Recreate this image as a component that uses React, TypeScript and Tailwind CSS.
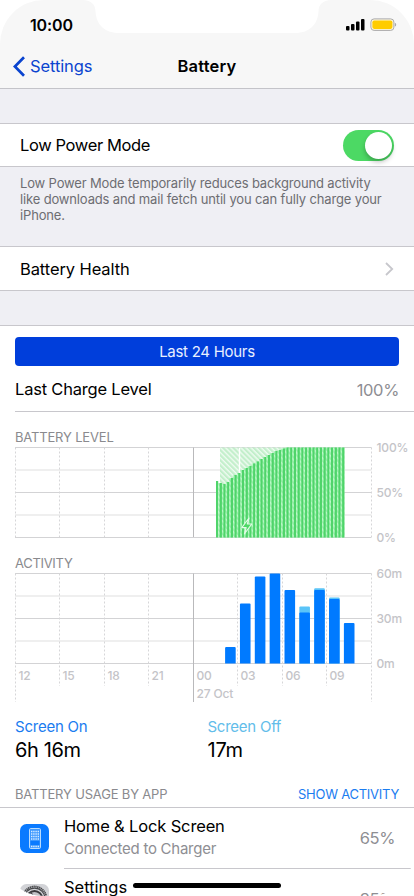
import type { ReactNode } from 'react';

const LEVEL_TOPS = [
  481, 483, 484, 482, 478, 475, 473, 470, 468, 466, 463.5, 461.5, 459, 457, 455, 453, 451, 450, 448.5,
];
const LEVELS = Array.from({ length: 35 }, (_, i) => (LEVEL_TOPS[i] ?? 447.5) - 440);

const ACTIVITY = [
  { on: 16.5, off: 0 },
  { on: 60, off: 0 },
  { on: 87, off: 0 },
  { on: 90, off: 0 },
  { on: 73.5, off: 0 },
  { on: 51, off: 6 },
  { on: 73.5, off: 1.7 },
  { on: 64.5, off: 1.5 },
  { on: 40.5, off: 0 },
];

const HOURS = ['12', '15', '18', '21', '00', '03', '06', '09'];
const GRID_X = [15.5, 59.5, 104.5, 148.5, 193.5, 237.5, 282.5, 326.5, 371.5];

function Grid({ top, long }: { top: number; long?: boolean }) {
  return (
    <g>
      {[0, 45, 90].map(y => (
        <path key={y} d={`M15 ${top + y + 0.5}H371.5`} stroke="#d3d3d5" />
      ))}
      {[22.5, 67.5].map(y => (
        <path key={y} d={`M15 ${top + y + 0.5}H371.5`} stroke="#efefef" strokeWidth="2" />
      ))}
      {GRID_X.map((x, i) => {
        const edge = i === 0 || i === 4 || i === 8;
        const bottom = top + (long ? (edge ? 129 : 113) : 90);
        return (
          <path
            key={x}
            d={`M${x} ${top + 0.5}V${bottom}`}
            stroke={i === 4 ? '#b9b9bb' : '#d6d6d8'}
            strokeDasharray={i === 4 ? undefined : '2 2'}
          />
        );
      })}
    </g>
  );
}

function Label({ x, y, children }: { x: number; y: number; children: ReactNode }) {
  return (
    <text x={x} y={y} fill="#c4c4c8" className="text-[12px] font-medium tracking-[-0.15px]">
      {children}
    </text>
  );
}

function LevelChart() {
  return (
    <svg width="414" height="104" viewBox="0 0 414 104" className="block overflow-visible">
      <defs>
        <pattern id="hatch" width="3.6" height="3.6" patternUnits="userSpaceOnUse" patternTransform="rotate(-45)">
          <rect width="3.6" height="3.6" fill="#effbf1" />
          <rect width="2.2" height="3.6" fill="#c3efcb" />
        </pattern>
        <pattern id="hatchDark" width="3.6" height="3.6" patternUnits="userSpaceOnUse" patternTransform="rotate(-45)">
          <rect width="3.6" height="3.6" fill="#bbf9c7" />
          <rect width="2" height="3.6" fill="#95efa7" />
        </pattern>
      </defs>
      <Grid top={7} />
      <rect x="220" y="7.5" width="67" height="45" fill="url(#hatch)" />
      <path d="M239.5 8V33" stroke="#fff" strokeWidth="1.4" />
      {LEVELS.map((y, i) => (
        <g key={i}>
          {i > 0 && <rect x={214.6 + i * 3.71} y={y} width="3.8" height={97.5 - y} fill="url(#hatchDark)" />}
          <rect x={216 + i * 3.71} y={y} width="2.2" height={97.5 - y} fill="#4fd46a" />
        </g>
      ))}
      <path d="M249 78l-7.2 9.6h4.4l-1.8 6.2 7.4-9.8h-4.5z" fill="#4cd964" stroke="#e3fbe7" strokeWidth="1.1" strokeLinejoin="round" />
      <Label x={376.5} y={12}>100%</Label>
      <Label x={376.5} y={57}>50%</Label>
      <Label x={376.5} y={102}>0%</Label>
    </svg>
  );
}

function ActivityChart() {
  return (
    <svg width="414" height="137" viewBox="0 0 414 137" className="block overflow-visible">
      <Grid top={3} long />
      {ACTIVITY.map(({ on, off }, i) => {
        const x = 225.1 + i * 14.85;
        const h = on + off;
        return (
          <g key={i}>
            {off > 0 && (
              <path d={`M${x} 93.5v${1 - h}q0-1 1-1h8.6q1 0 1 1v${h - 1}z`} fill="#5ac4f8" />
            )}
            <path d={`M${x} 93.5v${1 - on}q0-1 1-1h8.6q1 0 1 1v${on - 1}z`} fill="#007aff" />
          </g>
        );
      })}
      {HOURS.map((h, i) => (
        <Label key={h} x={GRID_X[i] + 3} y={110}>{h}</Label>
      ))}
      <Label x={196.5} y={128}>27 Oct</Label>
      <Label x={376.5} y={8}>60m</Label>
      <Label x={376.5} y={53}>30m</Label>
      <Label x={376.5} y={98}>0m</Label>
    </svg>
  );
}

function StatusIcons() {
  return (
    <svg width="50" height="14" viewBox="0 0 50 14" className="overflow-visible">
      <rect x="0" y="8" width="3.5" height="4.5" rx="1" />
      <rect x="5" y="6" width="3.5" height="6.5" rx="1" />
      <rect x="10" y="3.5" width="3.5" height="9" rx="1" />
      <rect x="15" y="1" width="3.5" height="11.5" rx="1" />
      <rect x="24.9" y="0.9" width="23" height="11.5" rx="3.2" fill="#fdf6d8" stroke="#a9a9ac" />
      <rect x="26.4" y="2.4" width="20" height="8.5" rx="1.8" fill="#ffcc00" />
      <path d="M48.9 4.8q1.3.6 1.3 1.9t-1.3 1.9z" fill="#a9a9ac" />
    </svg>
  );
}

function HomeIcon() {
  return (
    <svg width="29" height="29" viewBox="0 0 29 29">
      <rect width="29" height="29" rx="6.5" fill="#0a7aff" />
      <rect x="9.5" y="4.5" width="11" height="20" rx="1.2" fill="#3d98ff" stroke="#b9dcff" />
      {[7.5, 10, 12.5, 15].map(y => (
        <path key={y} d={`M11 ${y}h8`} stroke="#d8ecff" strokeWidth="1.4" strokeDasharray="1.4 .8" />
      ))}
      <rect x="10.5" y="17" width="9" height="4" fill="#0a7aff" />
      <path d="M11 22.5h8" stroke="#d8ecff" strokeWidth="1.4" strokeDasharray="1.4 .8" />
    </svg>
  );
}

function GearIcon() {
  return (
    <svg width="29" height="29" viewBox="0 0 29 29">
      <rect width="29" height="29" rx="6.5" fill="#d2d3d7" />
      <circle cx="14.5" cy="14.5" r="12" fill="none" stroke="#47484b" strokeWidth="1.8" strokeDasharray="1.4 .5" />
      <circle cx="14.5" cy="14.5" r="10.4" fill="#d2d3d7" stroke="#47484b" strokeWidth="1.2" />
      <circle cx="14.5" cy="14.5" r="7.6" fill="#c1c2c6" stroke="#39393c" strokeWidth="2" />
      <path d="M14.5 14.5L10.5 8M14.5 14.5h8M14.5 14.5L10.5 21" stroke="#47484b" strokeWidth="1.6" />
    </svg>
  );
}

export default function App() {
  return (
    <div className="relative flex h-[896px] w-[414px] flex-col overflow-hidden rounded-[44px] bg-white font-['Inter',sans-serif] text-[16.5px] leading-5 text-black">
      <header className="h-[89px] shrink-0 border-b border-[#c4c4c9] bg-[#f7f7f7]">
        <div className="flex h-[50px] items-center justify-between pl-[30px] pr-[18px]">
          <span className="text-[16px] font-semibold tracking-[-0.15px]">10:00</span>
          <StatusIcons />
        </div>
        <div className="grid h-8 grid-cols-3 items-center">
          <a className="flex items-center gap-[5px] pl-[13px] text-[#0a44cf]">
            <svg width="12" height="21" viewBox="0 0 12 21" fill="none" stroke="currentColor" strokeWidth="2.7">
              <path d="M11 1.2L1.9 10.5l9.1 9.3" />
            </svg>
            <span className="tracking-[-0.1px]">Settings</span>
          </a>
          <h1 className="text-center font-semibold tracking-[0.2px]">Battery</h1>
        </div>
      </header>
      {/* Notch */}
      <svg className="absolute left-0 top-0" width="414" height="34" viewBox="0 0 414 34">
        <path d="M83 0C91 .5 95.500 4 95.500 12C96.500 24 104 33 119 33H295C310 33 317.500 24 318.500 12C318.500 4 323 .5 331 0z" fill="#fff" />
      </svg>

      <section className="shrink-0 bg-[#efeff4] pt-[34px]">
        <div className="flex h-11 items-center justify-between border-y border-[#c8c7cc] bg-white pl-5 pr-5">
          <span className="tracking-[-0.38px]">Low Power Mode</span>
          <div className="flex h-[31px] w-[51px] items-center justify-end rounded-full bg-[#4cd964] pr-0.5">
            <div className="size-[27px] rounded-full bg-white shadow-[0_3px_5px_rgba(0,0,0,0.25)]" />
          </div>
        </div>
        <p className="h-[79px] pl-5 pt-2 text-[13px] leading-4 tracking-[-0.15px] text-[#6d6d72]">
          Low Power Mode temporarily reduces background activity
          <br />
          like downloads and mail fetch until you can fully charge your
          <br />
          iPhone.
        </p>
        <div className="flex h-[45px] items-center justify-between border-y border-[#c8c7cc] bg-white px-5">
          <span className="tracking-[-0.1px]">Battery Health</span>
          <svg width="9" height="14" viewBox="0 0 9 14" fill="none" stroke="#c7c7cc" strokeWidth="1.8">
            <path d="M1 1l6.200 6L1 13" />
          </svg>
        </div>
        <div className="h-[35px] border-b border-[#c8c7cc]" />
      </section>

      <main className="flex flex-col pt-[11px]">
        <button className="mx-[15px] h-[29px] rounded bg-[#003edb] text-[15px] tracking-[-0.28px] text-[#e8efff]">Last 24 Hours</button>
        <div className="ml-[15px] flex h-[46px] justify-between border-b border-[#c8c7cc] pr-[15px] pt-[13px]">
          <span className="tracking-[-0.2px]">Last Charge Level</span>
          <span className="pt-px tracking-[-0.35px] text-[#8e8e93]">100%</span>
        </div>
        <h2 className="h-7 pl-[15px] pt-[15px] text-[13px] tracking-[-0.17px] text-[#8a8a8e]">BATTERY LEVEL</h2>
        <LevelChart />
        <h2 className="h-[26px] pl-[15px] pt-[9px] text-[13px] tracking-[-0.3px] text-[#8a8a8e]">ACTIVITY</h2>
        <ActivityChart />
        <div className="grid h-[73px] grid-cols-2 pl-[15px] pt-[10px]">
          <div>
            <p className="text-[15px] tracking-[-0.22px] text-[#1a7cf0]">Screen On</p>
            <p className="text-[20px] leading-[26px] tracking-[-0.4px]">6h 16m</p>
          </div>
          <div className="-ml-[7px]">
            <p className="text-[15px] tracking-[-0.25px] text-[#62bdea]">Screen Off</p>
            <p className="text-[20px] leading-[26px] tracking-[-0.2px]">17m</p>
          </div>
        </div>
        <div className="flex h-7 items-center justify-between border-b border-[#c8c7cc] px-[15px] text-[13px] text-[#8a8a8e]">
          <span className="tracking-[-0.17px]">BATTERY USAGE BY APP</span>
          <a className="tracking-[-0.25px] text-[#1a7cf0]">SHOW ACTIVITY</a>
        </div>
        <div className="flex h-[61px] items-center pl-5">
          <HomeIcon />
          <div className="ml-[15px] flex h-full flex-1 items-center justify-between border-b border-[#c8c7cc] pb-0.5 pr-[19px]">
            <div>
              <p className="leading-[23px] tracking-[-0.15px]">Home &amp; Lock Screen</p>
              <p className="text-[15px] leading-[22px] tracking-[-0.25px] text-[#8e8e93]">Connected to Charger</p>
            </div>
            <span className="pt-0.5 tracking-[-0.4px] text-[#8e8e93]">65%</span>
          </div>
        </div>
        <div className="flex h-[61px] items-center pb-0.5 pl-5">
          <GearIcon />
          <div className="ml-[15px] flex h-full flex-1 items-center justify-between pr-[19px]">
            <div>
              <p className="leading-[23px]">Settings</p>
              <p className="text-[15px] leading-[22px] tracking-[-0.25px] text-[#8e8e93]">Connected to Charger</p>
            </div>
            <span className="tracking-[-0.4px] text-[#8e8e93]">35%</span>
          </div>
        </div>
      </main>
      {/* Home indicator */}
      <div className="absolute left-[133px] top-[883px] h-[5px] w-[148px] rounded-full bg-black" />
    </div>
  );
}
